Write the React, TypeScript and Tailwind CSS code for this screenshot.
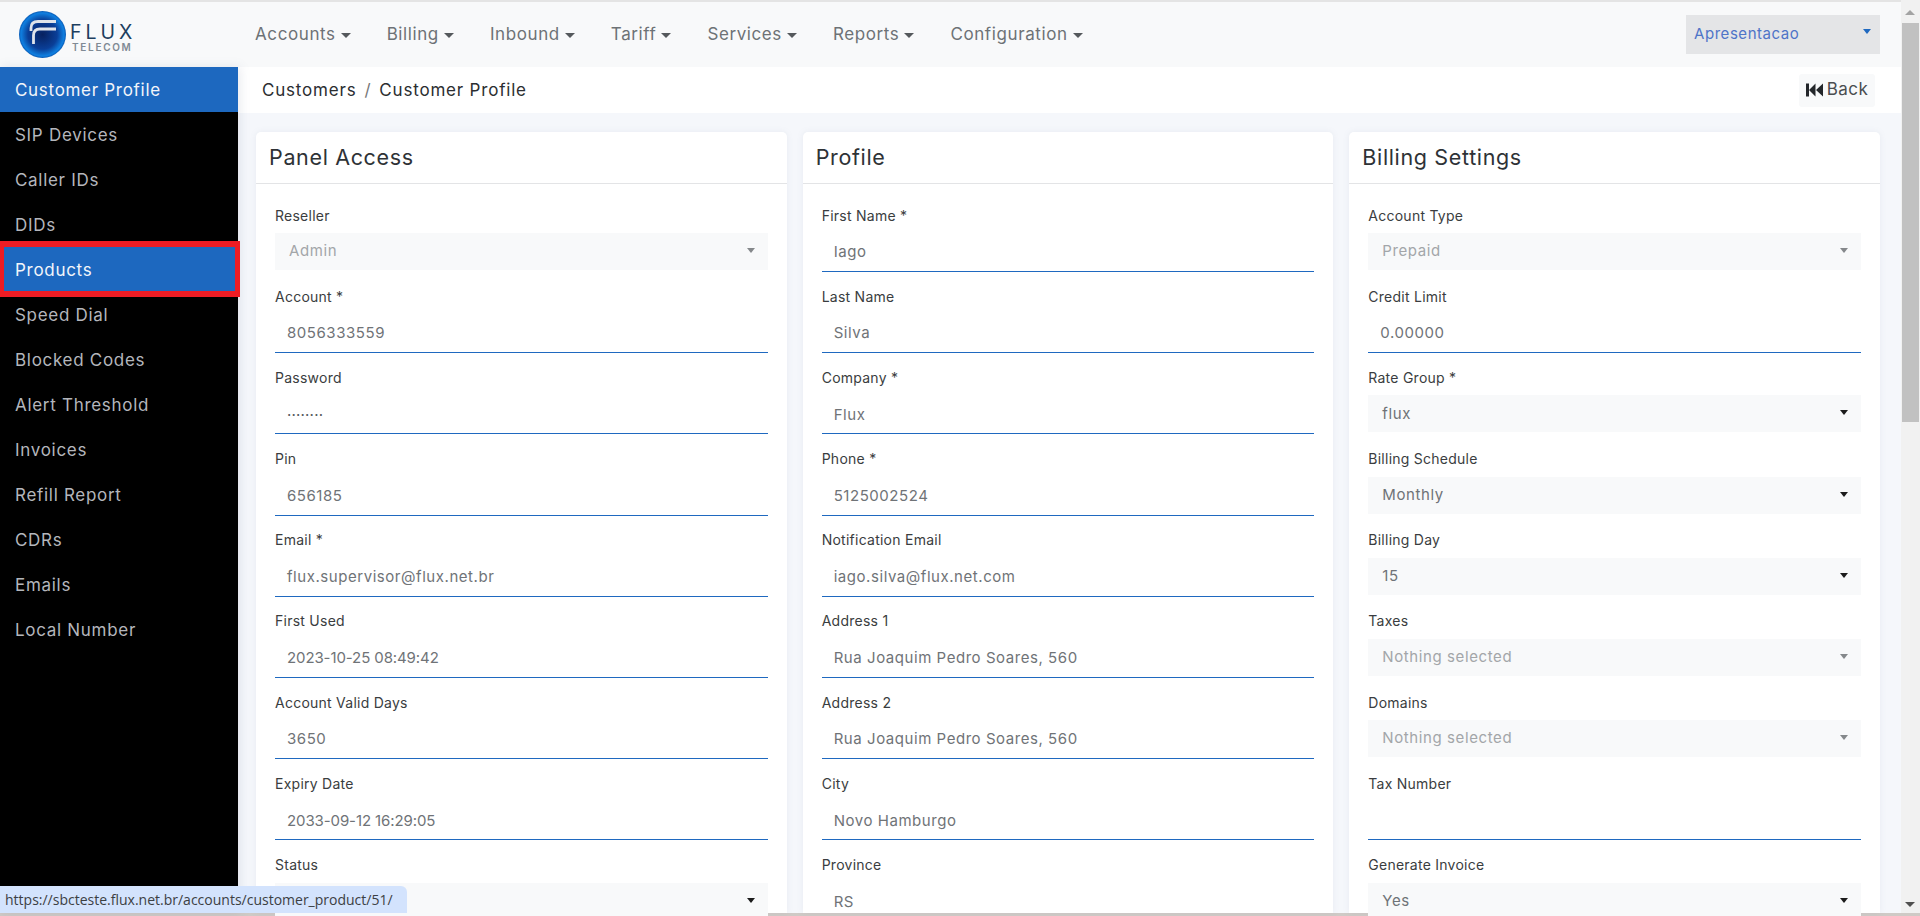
const f = "font-['Inter',sans-serif]";
type Row = { l: string; v?: string; k: 'i' | 's' | 'd'; t?: string };
const tight = 'tracking-[-0.1px]';
const col1: Row[] = [
  { l: 'Reseller', v: 'Admin', k: 'd' },
  { l: 'Account *', v: '8056333559', k: 'i' },
  { l: 'Password', v: '········', k: 'i', t: 'tracking-[0.2px] text-[#55595c]' },
  { l: 'Pin', v: '656185', k: 'i' },
  { l: 'Email *', v: 'flux.supervisor@flux.net.br', k: 'i' },
  { l: 'First Used', v: '2023-10-25 08:49:42', k: 'i', t: tight },
  { l: 'Account Valid Days', v: '3650', k: 'i' },
  { l: 'Expiry Date', v: '2033-09-12 16:29:05', k: 'i', t: tight },
  { l: 'Status', v: '', k: 's' },
];
const col2: Row[] = [
  { l: 'First Name *', v: 'Iago', k: 'i' },
  { l: 'Last Name', v: 'Silva', k: 'i' },
  { l: 'Company *', v: 'Flux', k: 'i' },
  { l: 'Phone *', v: '5125002524', k: 'i' },
  { l: 'Notification Email', v: 'iago.silva@flux.net.com', k: 'i' },
  { l: 'Address 1', v: 'Rua Joaquim Pedro Soares, 560', k: 'i' },
  { l: 'Address 2', v: 'Rua Joaquim Pedro Soares, 560', k: 'i' },
  { l: 'City', v: 'Novo Hamburgo', k: 'i' },
  { l: 'Province', v: 'RS', k: 'i' },
];
const col3: Row[] = [
  { l: 'Account Type', v: 'Prepaid', k: 'd' },
  { l: 'Credit Limit', v: '0.00000', k: 'i' },
  { l: 'Rate Group *', v: 'flux', k: 's' },
  { l: 'Billing Schedule', v: 'Monthly', k: 's' },
  { l: 'Billing Day', v: '15', k: 's' },
  { l: 'Taxes', v: 'Nothing selected', k: 'd' },
  { l: 'Domains', v: 'Nothing selected', k: 'd' },
  { l: 'Tax Number', v: '', k: 'i' },
  { l: 'Generate Invoice', v: 'Yes', k: 's' },
];
const side = ['Customer Profile', 'SIP Devices', 'Caller IDs', 'DIDs', 'Products', 'Speed Dial', 'Blocked Codes', 'Alert Threshold', 'Invoices', 'Refill Report', 'CDRs', 'Emails', 'Local Number'];
const nav = ['Accounts', 'Billing', 'Inbound', 'Tariff', 'Services', 'Reports', 'Configuration'];

function Caret({ c }: { c: string }) {
  return <span className={`inline-block w-0 h-0 border-x-[4px] border-x-transparent border-t-[5px] ${c}`} />;
}

function Field({ r }: { r: Row }) {
  return (
    <div className="h-[81.2px] shrink-0">
      <div className="h-[27px] pt-[0.5px] text-[14px] leading-[18px] text-[#3a3d40] tracking-[0.25px]">{r.l}</div>
      {r.k === 'i' ? (
        <div className={`h-[39px] border-b border-[#1f69c0] pl-[12px] flex items-center text-[15px] text-[#6f7377] ${r.t ?? 'tracking-[0.55px]'}`}>
          <span className="pt-[1px]">{r.v}</span>
        </div>
      ) : (
        <div className={`h-[37px] bg-[#f8f9fa] pl-[14px] pr-[13px] flex items-center justify-between text-[15px] tracking-[0.6px] ${r.k === 'd' ? 'text-[#a3a6a9]' : 'text-[#6f7377]'}`}>
          <span>{r.v}</span>
          <span className="-mt-[2px] flex"><Caret c={r.k === 'd' ? 'border-t-[#85888b]' : 'border-t-[#1c1c1c]'} /></span>
        </div>
      )}
    </div>
  );
}

function Card({ title, rows }: { title: string; rows: Row[] }) {
  return (
    <div className="w-[530.67px] bg-white rounded-t-[5px] shadow-[0_0_6px_rgba(120,130,160,0.10)] shrink-0">
      <div className="h-[52px] border-b border-[#e3e4e6] pl-[13px] flex items-center text-[21.5px] text-[#2e3236] tracking-[0.65px]">{title}</div>
      <div className="px-[19px] pt-[22px]">
        {rows.map((r) => <Field key={r.l} r={r} />)}
      </div>
    </div>
  );
}

export default function App() {
  return (
    <div className={`relative h-[916px] w-[1920px] overflow-hidden bg-[#f5f7fb] ${f}`}>
      <div className="flex h-[913px]">
        <div className="w-[1901px] flex flex-col min-w-0">
          <div className="h-[67px] shrink-0 bg-[#f8f9fa] border-t-2 border-[#e4e4e4] flex items-center">
            <div className="w-[255px] shrink-0 pl-[19px] flex items-center">
              <svg width="47" height="47" viewBox="0 0 47 47" className="shrink-0">
                <defs>
                  <radialGradient id="lg" cx="50%" cy="50%" r="52%">
                    <stop offset="0%" stopColor="#07215f" />
                    <stop offset="60%" stopColor="#0a3f98" />
                    <stop offset="88%" stopColor="#0f7fe0" />
                    <stop offset="100%" stopColor="#0a4aa0" />
                  </radialGradient>
                </defs>
                <circle cx="23.5" cy="23.5" r="23.5" fill="url(#lg)" />
                <path d="M37 10.5 H19 Q12 10.5 12 17 V20 M37 18 H21 Q14.5 18 14.5 24.5 V33" fill="none" stroke="#dfe4ea" strokeWidth="2.8" />
              </svg>
              <div className="ml-[4px] mt-[5px] flex flex-col">
                <span className="text-[19.5px] leading-[19px] tracking-[4px] text-[#1d3f5f]">FLUX</span>
                <span className="text-[10px] leading-[10px] ml-[2px] tracking-[1.7px] text-[#7f8a94] font-semibold">TELECOM</span>
              </div>
            </div>
            <div className="flex items-center pt-[1px] gap-[36px] text-[17px] text-[#6d7276] tracking-[0.6px]">
              {nav.map((n) => (
                <div key={n} className="flex items-center gap-[5px]">
                  <span>{n}</span>
                  <span className="inline-block w-0 h-0 border-x-[5px] border-x-transparent border-t-[5px] border-t-[#55595c]" />
                </div>
              ))}
            </div>
            <div className="ml-auto mr-[21px] w-[194px] h-[39px] bg-[#e4e5e7] pl-[8px] pr-[9px] flex items-center justify-between text-[15px] text-[#4f74c8] tracking-[0.55px]">
              <span>Apresentacao</span>
              <span className="-mt-[6px] flex"><Caret c="border-t-[#1f69c0]" /></span>
            </div>
          </div>
          <div className="flex flex-1 min-h-0">
            <div className="w-[238px] shrink-0 bg-black flex flex-col shadow-[2px_0_10px_rgba(100,110,140,0.15)] z-10">
              {side.map((s) => (
                <div key={s} className={`h-[45px] shrink-0 pl-[15px] pt-[2px] flex items-center text-[17px] tracking-[0.7px] ${s === 'Customer Profile' || s === 'Products' ? 'bg-[#1d68bf] text-[#f2f5fa]' : 'text-[#b4b6bc]'}`}>{s}</div>
              ))}
            </div>
            <div className="flex-1 min-w-0 flex flex-col">
              <div className="h-[46px] shrink-0 bg-white flex items-center justify-between pl-[24px] pr-[26px] text-[17px] text-[#2b2e31] tracking-[0.8px]">
                <div className="flex items-center pt-[2px]">
                  <span>Customers</span>
                  <span className="mx-[8px] text-[#777]">/</span>
                  <span>Customer Profile</span>
                </div>
                <div className="h-[33px] w-[76px] bg-[#f8f9fa] rounded-[3px] flex items-center justify-center gap-[4px] text-[#4a4d50] tracking-[0.5px]">
                  <svg width="17" height="14" viewBox="0 0 17 14" className="shrink-0"><path d="M0 0.5h3v13H0zM9.5 0.5v13L3 7zM17 0.5v13L10 7z" fill="#23262a" /></svg>
                  <span>Back</span>
                </div>
              </div>
              <div className="flex pl-[18px] pt-[19px] gap-[16px] min-h-0">
                <Card title="Panel Access" rows={col1} />
                <Card title="Profile" rows={col2} />
                <Card title="Billing Settings" rows={col3} />
              </div>
            </div>
          </div>
        </div>
        <div className="w-[19px] shrink-0 bg-[#f1f1f1] flex flex-col items-center pt-[10px] pb-[6px]">
          <span className="w-0 h-0 border-x-[5px] border-x-transparent border-b-[5px] border-b-[#a3a3a3] mr-[2px]" />
          <div className="w-[17px] h-[399px] bg-[#c1c1c1] mt-[8px] mr-[1px]" />
          <span className="mt-auto w-0 h-0 border-x-[5px] border-x-transparent border-t-[5px] border-t-[#505050] mr-[2px]" />
        </div>
      </div>
      <div className="h-[3px] bg-[#cfcac6]" />
      <div className="absolute left-[0px] top-[886px] w-[407px] h-[27px] bg-[#d3e3fd] rounded-tr-[6px] pl-[5px] flex items-center text-[14px] text-[#3c4043] font-['Open_Sans',sans-serif] z-20">
        https://sbcteste.flux.net.br/accounts/customer_product/51/
      </div>
      <div className="absolute left-[0px] top-[241px] w-[240px] h-[56px] border-y-[6px] border-l-[4px] border-r-[5px] border-[#ed1c24] z-20" />
    </div>
  );
}
